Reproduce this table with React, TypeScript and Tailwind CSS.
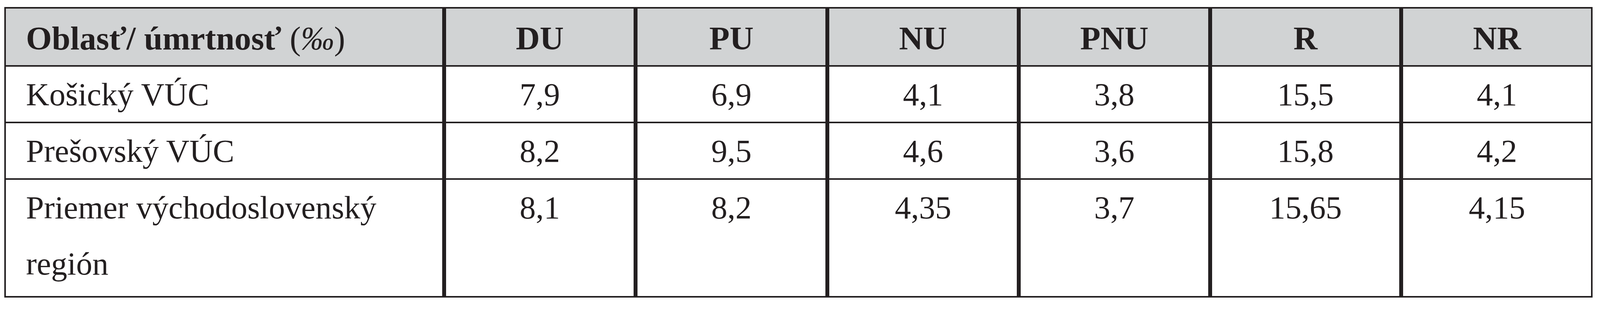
const headers = ["DU", "PU", "NU", "PNU", "R", "NR"];

const rows: { name: string[]; values: string[]; tall?: boolean }[] = [
  { name: ["Košický VÚC"], values: ["7,9", "6,9", "4,1", "3,8", "15,5", "4,1"] },
  { name: ["Prešovský VÚC"], values: ["8,2", "9,5", "4,6", "3,6", "15,8", "4,2"] },
  {
    name: ["Priemer východoslovenský", "región"],
    values: ["8,1", "8,2", "4,35", "3,7", "15,65", "4,15"],
    tall: true,
  },
];

// rozmery sú v vw, aby tabuľka vyplnila šírku okna
export default function App() {
  return (
    <div className="h-[800px] w-full overflow-hidden bg-white pl-[0.265vw] pt-[18px] text-[#231f20] [font-family:'Liberation_Serif','Times_New_Roman',serif]">
      <div className="grid w-[99.27vw] grid-cols-[1339fr_575fr_577fr_575fr_575fr_574fr_577fr] gap-x-[0.2445vw] gap-y-[4px] bg-[#231f20] p-[4px]">
        <div className="h-[145px] overflow-hidden bg-[#d1d3d4] pl-[1.263vw]">
          <div className="mt-[calc(32.5px_-_0.7013vw)] whitespace-nowrap text-[2.078vw] font-bold leading-[145px]">
            Oblasť/ úmrtnosť <span className="font-normal">(<span className="italic">‰</span>)</span>
          </div>
        </div>
        {headers.map((h) => (
          <div key={h} className="h-[145px] overflow-hidden bg-[#d1d3d4] text-center">
            <div className="mt-[calc(32.5px_-_0.7013vw)] text-[2.078vw] font-bold leading-[145px]">{h}</div>
          </div>
        ))}

        {rows.map((row) => (
          <>
            <div key={row.name[0]} className={`${row.tall ? "h-[298px]" : "h-[141px]"} overflow-hidden bg-white pl-[1.263vw]`}>
              <div className="mt-[calc(27px_-_0.6807vw)] whitespace-nowrap text-[2.017vw] leading-[144px]">
                {row.name.map((line) => (
                  <div key={line}>{line}</div>
                ))}
              </div>
            </div>
            {row.values.map((v, i) => (
              <div key={row.name[0] + i} className={`${row.tall ? "h-[298px]" : "h-[141px]"} overflow-hidden bg-white text-center`}>
                <div className="mt-[calc(27px_-_0.6807vw)] text-[2.017vw] leading-[144px]">{v}</div>
              </div>
            ))}
          </>
        ))}
      </div>
    </div>
  );
}
